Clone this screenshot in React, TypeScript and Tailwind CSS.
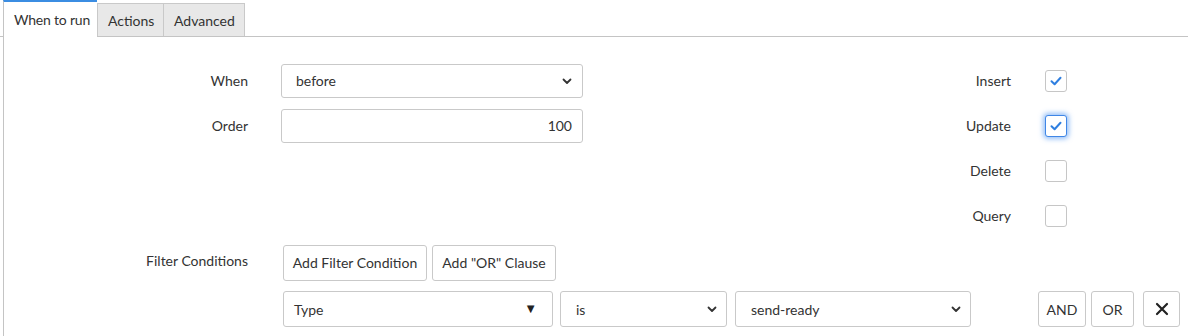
import React from "react";

const Check = () => (
  <svg width="14" height="14" viewBox="0 0 14 14" fill="none">
    <path d="M2.5 7.2 L5.6 10.2 L11.5 3.8" stroke="#2f7fe0" strokeWidth="2" strokeLinecap="round" strokeLinejoin="round" />
  </svg>
);

const Chevron = () => (
  <svg width="10" height="10" viewBox="0 0 10 10" fill="none">
    <path d="M1.5 3.5 L5 7 L8.5 3.5" stroke="#333" strokeWidth="1.8" strokeLinecap="round" strokeLinejoin="round" />
  </svg>
);

function Checkbox({ checked, focused }: { checked?: boolean; focused?: boolean }) {
  return (
    <div
      className={
        "w-[22px] h-[22px] rounded-[3px] bg-white flex items-center justify-center border " +
        (focused
          ? "border-[#3f86e6] shadow-[0_0_5px_2px_rgba(64,140,240,0.55)]"
          : "border-[#c6c6c6]")
      }
    >
      {checked && <Check />}
    </div>
  );
}

function SideRow({ label, checked, focused }: { label: string; checked?: boolean; focused?: boolean }) {
  return (
    <div className="h-[45px] flex items-center">
      <div className="w-[72px] text-right">{label}</div>
      <div className="ml-[34px]">
        <Checkbox checked={checked} focused={focused} />
      </div>
    </div>
  );
}

export default function App() {
  return (
    <div className="w-[1188px] h-[336px] bg-white text-[14px] text-[#333] font-['Lato',sans-serif] overflow-hidden">
      {/* Tabs */}
      <div className="flex h-[37px] border-b border-[#c4c4c4] pl-[3px] whitespace-nowrap">
        <div className="shrink-0 h-[37px] -mb-px bg-white border-l border-[#c4c4c4] border-t-2 border-t-[#3b8de2] pl-[10px] flex items-center w-[94px] tracking-[-0.2px]">
          When to run
        </div>
        <div className="shrink-0 mt-[3px] h-[33px] bg-[#e8e8e8] border border-[#c9c9c9] border-b-0 pl-[10px] flex items-center w-[67px]">
          Actions
        </div>
        <div className="shrink-0 mt-[3px] h-[33px] bg-[#e8e8e8] border-t border-r border-[#c9c9c9] pl-[10px] flex items-center w-[81px]">
          Advanced
        </div>
      </div>

      {/* Body */}
      <div className="border-l border-[#c4c4c4] ml-[3px] h-[299px] whitespace-nowrap">
        <div className="flex pt-[21px]">
          {/* Left column */}
          <div className="w-[935px] shrink-0">
            <div className="h-[45px] flex items-center">
              <div className="w-[244px] text-right">When</div>
              <div className="ml-[33px] w-[302px] h-[34px] border border-[#c9c9c9] rounded-[3px] flex items-center justify-between pl-[14px] pr-[10px]">
                <span>before</span>
                <Chevron />
              </div>
            </div>
            <div className="h-[45px] flex items-center">
              <div className="w-[244px] text-right">Order</div>
              <div className="ml-[33px] w-[302px] h-[34px] border border-[#c9c9c9] rounded-[3px] flex items-center justify-end pr-[10px]">
                100
              </div>
            </div>
          </div>
          {/* Right column */}
          <div>
            <SideRow label="Insert" checked />
            <SideRow label="Update" checked focused />
            <SideRow label="Delete" />
            <SideRow label="Query" />
          </div>
        </div>

        {/* Filter conditions */}
        <div className="flex mt-[7px]">
          <div className="w-[244px] text-right pt-[5px]">Filter Conditions</div>
          <div className="ml-[35px] flex flex-col">
            <div className="flex gap-[5px]">
              <button className="h-[36px] w-[144px] border border-[#c9c9c9] rounded-[3px] bg-white pb-[1px]">Add Filter Condition</button>
              <button className="h-[36px] w-[124px] border border-[#c9c9c9] rounded-[3px] bg-white pb-[1px]">Add "OR" Clause</button>
            </div>
            <div className="flex items-center mt-[10px]">
              <div className="w-[270px] h-[36px] border border-[#c9c9c9] rounded-[3px] flex items-center justify-between pl-[10px] pr-[15px]">
                <span>Type</span>
                <span className="text-[13px] text-[#222]">▼</span>
              </div>
              <div className="ml-[7px] w-[167px] h-[36px] border border-[#c9c9c9] rounded-[3px] flex items-center justify-between pl-[15px] pr-[9px]">
                <span>is</span>
                <Chevron />
              </div>
              <div className="ml-[8px] w-[236px] h-[36px] border border-[#c9c9c9] rounded-[3px] flex items-center justify-between pl-[15px] pr-[9px]">
                <span>send-ready</span>
                <Chevron />
              </div>
              <button className="ml-[67px] w-[48px] h-[36px] border border-[#c9c9c9] rounded-[3px] bg-white">AND</button>
              <button className="ml-[5px] w-[43px] h-[36px] border border-[#c9c9c9] rounded-[3px] bg-white">OR</button>
              <button className="ml-[9px] w-[37px] h-[36px] border border-[#c9c9c9] rounded-[3px] bg-white flex items-center justify-center">
                <svg width="14" height="14" viewBox="0 0 14 14">
                  <path d="M2 2 L12 12 M12 2 L2 12" stroke="#222" strokeWidth="2.2" strokeLinecap="round" />
                </svg>
              </button>
            </div>
          </div>
        </div>
      </div>
    </div>
  );
}
